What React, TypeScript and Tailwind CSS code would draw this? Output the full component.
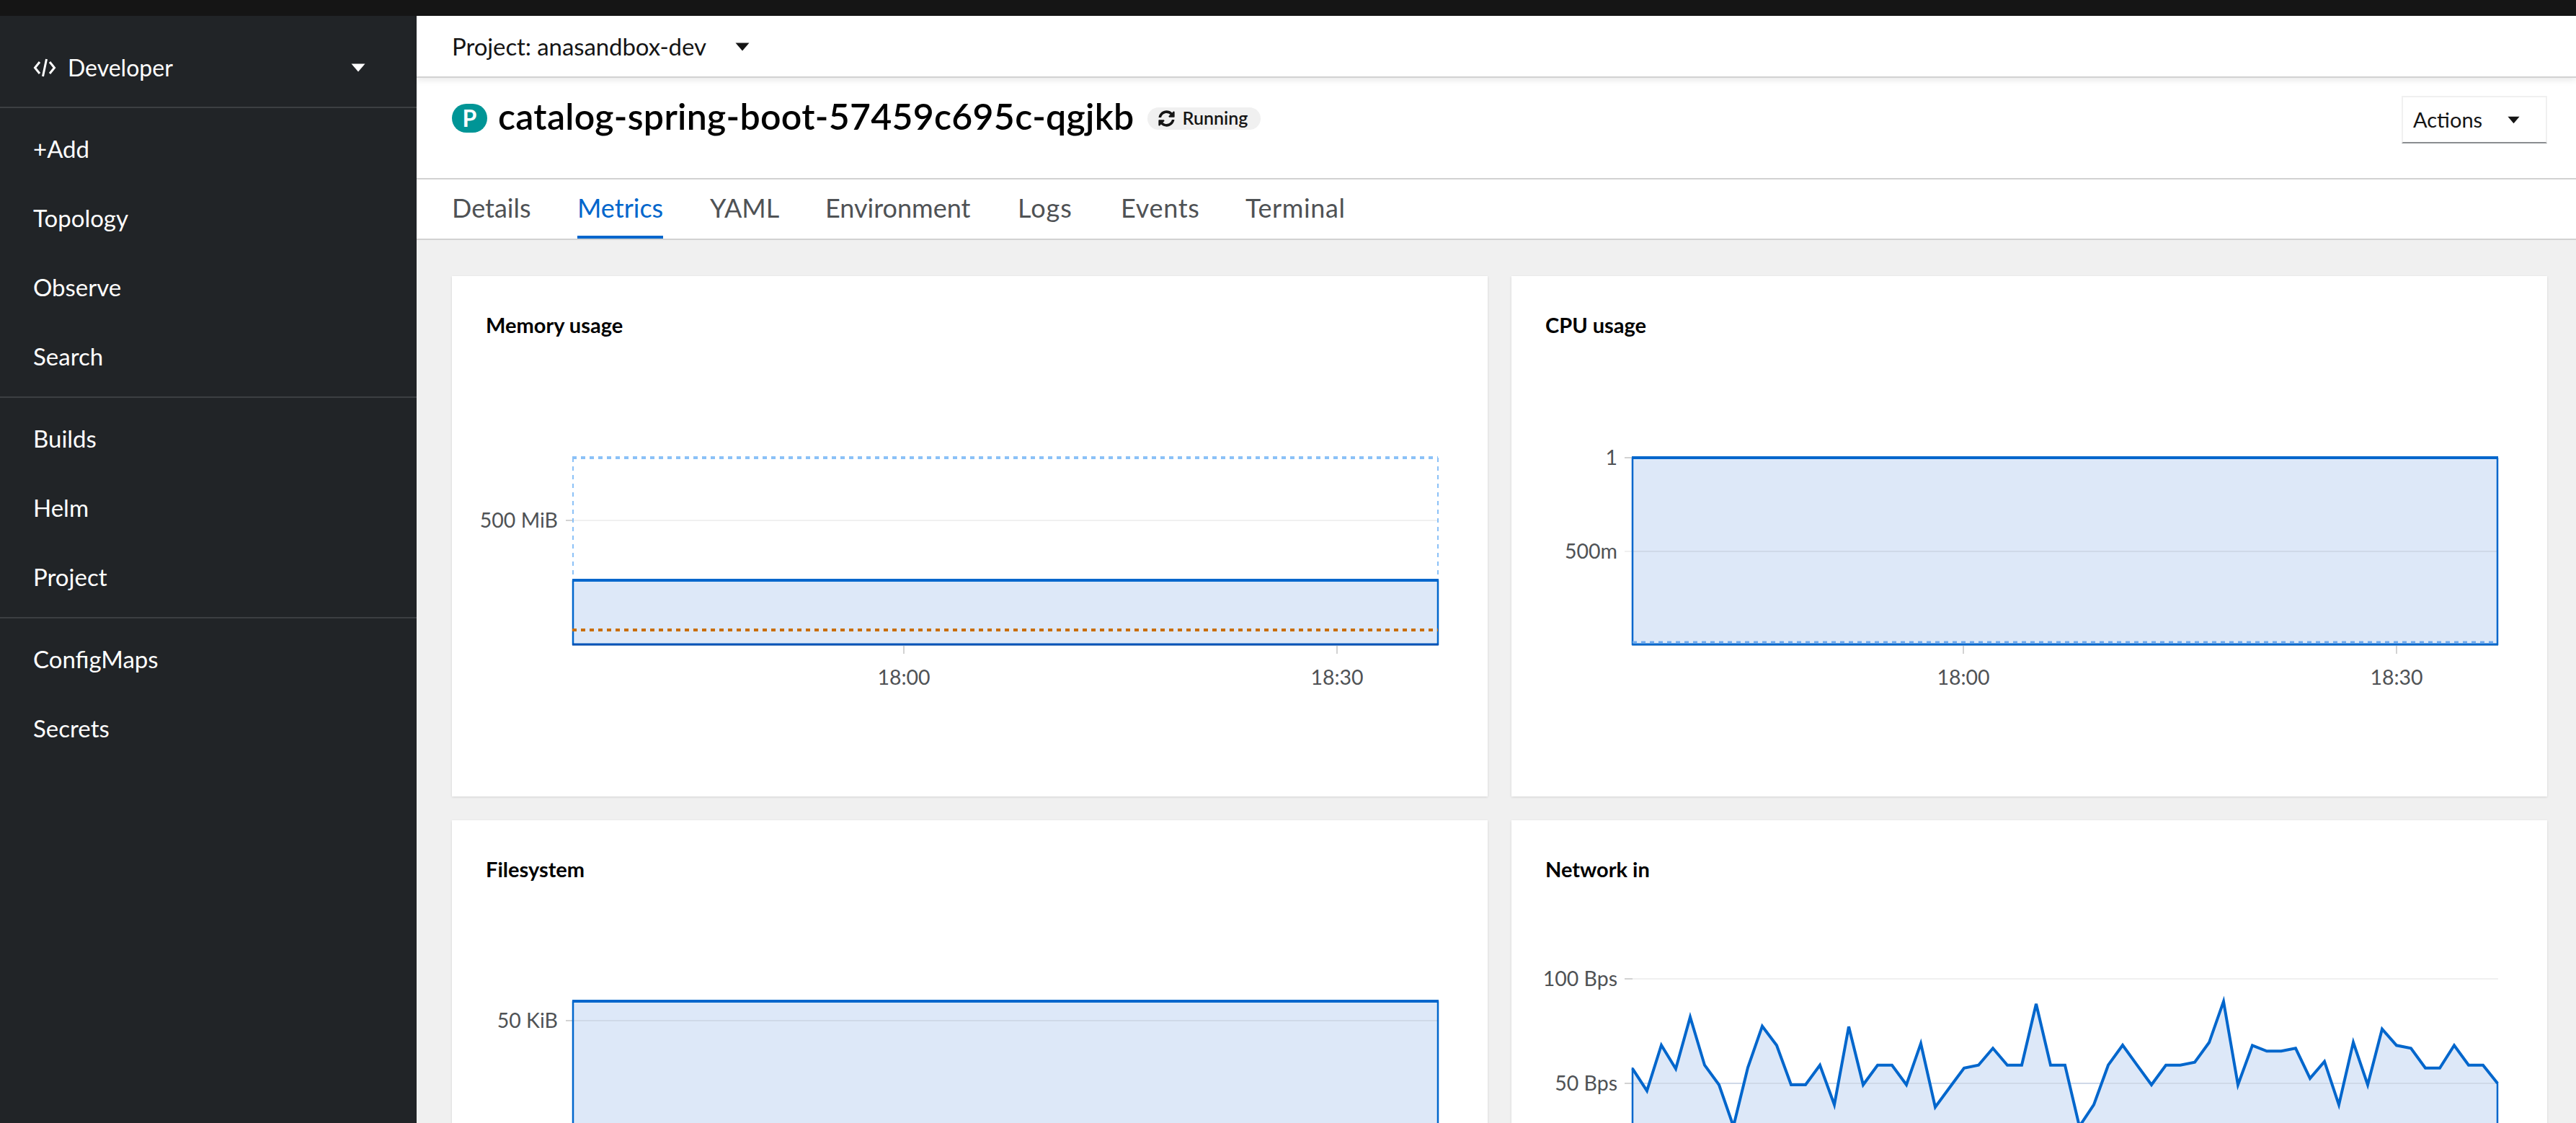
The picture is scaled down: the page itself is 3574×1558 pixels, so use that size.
import React from "react";
import { FaSyncAlt } from "react-icons/fa";

const font = { fontFamily: "Lato, sans-serif" };

const Caret = ({ className }: { className: string }) => (
  <svg viewBox="0 0 20 12" className={className} fill="currentColor">
    <path d="M0.5 0.5 H19.5 L10 11.5 Z" />
  </svg>
);

const navGroups = [
  ["+Add", "Topology", "Observe", "Search"],
  ["Builds", "Helm", "Project"],
  ["ConfigMaps", "Secrets"],
];

const tabs = [
  { label: "Details", cls: "w-[109px]" },
  { label: "Metrics", cls: "w-[119px]" },
  { label: "YAML", cls: "w-[95px]" },
  { label: "Environment", cls: "w-[202px]" },
  { label: "Logs", cls: "w-[78px] tracking-[1px]" },
  { label: "Events", cls: "w-[108px] tracking-[0.7px]" },
  { label: "Terminal", cls: "w-[137px] tracking-[0.6px]" },
];

const BLUE = "#0066cc";
const FILL = "#dde8f8";
const GRID = "#f0f0f0";
const TICK = "#d2d2d2";
const LABEL = "#4f5255";

const YLabel = ({ x, y, children }: { x: number; y: number; children: React.ReactNode }) => (
  <text x={x + 1} y={y + 10} textAnchor="end" fontSize={28.5} fill={LABEL} style={font}>
    {children}
  </text>
);
const XLabel = ({ x, y, children }: { x: number; y: number; children: React.ReactNode }) => (
  <text x={x} y={y + 10} textAnchor="middle" fontSize={28.5} fill={LABEL} style={font}>
    {children}
  </text>
);

const MemoryChart = () => (
  <svg viewBox="627 481 1437 622" className="block w-full h-[622px]">
    <line x1={785} x2={1995} y1={720} y2={720} stroke={GRID} strokeWidth={2} />
    <line x1={785} x2={794} y1={720} y2={720} stroke={TICK} strokeWidth={2} />
    <line x1={794} x2={1995} y1={893} y2={893} stroke={TICK} strokeWidth={2} />
    <line x1={1254} x2={1254} y1={893} y2={905} stroke={TICK} strokeWidth={2} />
    <line x1={1855} x2={1855} y1={893} y2={905} stroke={TICK} strokeWidth={2} />
    <line x1={794} x2={1995} y1={633} y2={633} stroke="#8bc1f7" strokeWidth={4} strokeDasharray="6 6" />
    <line x1={795} x2={795} y1={633} y2={803} stroke="#8bc1f7" strokeWidth={2} strokeDasharray="6 6" />
    <line x1={1995} x2={1995} y1={633} y2={803} stroke="#8bc1f7" strokeWidth={2} strokeDasharray="6 6" />
    <rect x={795} y={803} width={1200} height={90} fill={FILL} />
    <path d="M795 893 V803 M1995 803 V893" fill="none" stroke={BLUE} strokeWidth={2.5} />
    <line x1={794} x2={1996} y1={803} y2={803} stroke={BLUE} strokeWidth={4} />
    <line x1={794} x2={1996} y1={892} y2={892} stroke="#0053b8" strokeWidth={3} />
    <line x1={794} x2={1995} y1={872} y2={872} stroke="#c96d00" strokeWidth={4} strokeDasharray="6 6" />
    <YLabel x={773} y={720}>500 MiB</YLabel>
    <XLabel x={1254} y={938}>18:00</XLabel>
    <XLabel x={1855} y={938}>18:30</XLabel>
  </svg>
);

const CpuChart = () => (
  <svg viewBox="2097 481 1437 622" className="block w-full h-[622px]">
    <line x1={2254} x2={2265} y1={633} y2={633} stroke={TICK} strokeWidth={2} />
    <line x1={2254} x2={3466} y1={763} y2={763} stroke={GRID} strokeWidth={2} />
    <line x1={2265} x2={3466} y1={893} y2={893} stroke={TICK} strokeWidth={2} />
    <line x1={2724} x2={2724} y1={893} y2={905} stroke={TICK} strokeWidth={2} />
    <line x1={3325} x2={3325} y1={893} y2={905} stroke={TICK} strokeWidth={2} />
    <rect x={2265} y={633} width={1200} height={260} fill={FILL} />
    <line x1={2265} x2={3465} y1={763} y2={763} stroke="#cfd9e8" strokeWidth={2} />
    <path d="M2265 893 V633 M3465 633 V893" fill="none" stroke={BLUE} strokeWidth={2.5} />
    <line x1={2264} x2={3466} y1={633} y2={633} stroke={BLUE} strokeWidth={4} />
    <line x1={2264} x2={3466} y1={892} y2={892} stroke={BLUE} strokeWidth={3} />
    <line x1={2265} x2={3465} y1={889} y2={889} stroke="#6ea9ee" strokeWidth={3} strokeDasharray="6 6" />
    <YLabel x={2243} y={633}>1</YLabel>
    <YLabel x={2243} y={763}>500m</YLabel>
    <XLabel x={2724} y={938}>18:00</XLabel>
    <XLabel x={3325} y={938}>18:30</XLabel>
  </svg>
);

const FilesystemChart = () => (
  <svg viewBox="627 1237 1437 622" className="block w-full h-[622px]">
    <line x1={785} x2={794} y1={1415} y2={1415} stroke={TICK} strokeWidth={2} />
    <rect x={795} y={1388} width={1200} height={300} fill={FILL} />
    <line x1={795} x2={1995} y1={1415} y2={1415} stroke="#cfd9e8" strokeWidth={2} />
    <path d="M795 1700 V1388 M1995 1388 V1700" fill="none" stroke={BLUE} strokeWidth={2.5} />
    <line x1={794} x2={1996} y1={1388} y2={1388} stroke={BLUE} strokeWidth={4} />
    <YLabel x={773} y={1415}>50 KiB</YLabel>
  </svg>
);

const netZ = [
  545, 637, 447, 545, 330, 530, 612, 785, 540, 368, 448, 612, 612, 530, 695, 370, 612, 530, 530, 612, 440,
  705, 623, 542, 530, 460, 530, 530, 275, 530, 530, 785, 695, 530, 447, 530, 612, 530, 530, 518, 436, 265,
  612, 448, 472, 472, 460, 585, 515, 695, 435, 612, 380, 448, 460, 542, 542, 448, 530, 530, 605,
];
const netPts = netZ.map((z, i) => `${2265 + i * 20},${(1300 + z / 3).toFixed(1)}`).join(" ");

const NetworkChart = () => (
  <svg viewBox="2097 1237 1437 622" className="block w-full h-[622px]">
    <line x1={2254} x2={3466} y1={1357} y2={1357} stroke={GRID} strokeWidth={2} />
    <line x1={2254} x2={2265} y1={1357} y2={1357} stroke={TICK} strokeWidth={2} />
    <line x1={2254} x2={3466} y1={1502} y2={1502} stroke={GRID} strokeWidth={2} />
    <line x1={2254} x2={2265} y1={1502} y2={1502} stroke={TICK} strokeWidth={2} />
    <polygon points={`2265,1700 ${netPts} 3465,1700`} fill={FILL} />
    <line x1={2265} x2={3465} y1={1502} y2={1502} stroke="#cfd9e8" strokeWidth={2} />
    <polyline points={netPts} fill="none" stroke={BLUE} strokeWidth={4} />
    <path d="M2265 1480 V1700 M3465 1500 V1700" fill="none" stroke={BLUE} strokeWidth={2.5} />
    <YLabel x={2243} y={1357}>100 Bps</YLabel>
    <YLabel x={2243} y={1502}>50 Bps</YLabel>
  </svg>
);

const Card = ({ title, children }: { title: string; children: React.ReactNode }) => (
  <div className="h-[722px] bg-white shadow-[0_1px_3px_rgba(3,3,3,0.12)]">
    <div className="h-[100px] px-[47px] pt-[48px] text-[29px] leading-[40px] font-bold text-black">{title}</div>
    {children}
  </div>
);

export default function App() {
  return (
    <div className="flex h-[1558px] w-[3574px] flex-col overflow-hidden bg-[#f0f0f0]" style={font}>
      <div className="h-[22px] shrink-0 bg-[#151515]" />
      <div className="flex min-h-0 flex-1">
        <aside className="w-[578px] shrink-0 bg-[#212427] text-white">
          <div className="flex h-[126px] items-center justify-between pl-[46px] pr-[71px] pt-[18px] text-[32px]">
            <div className="flex items-center gap-[16px]">
              <svg viewBox="0 0 32 32" className="h-[32px] w-[32px]" fill="none" stroke="currentColor" strokeWidth={3}>
                <path d="M9 8 L2.5 16 L9 24" />
                <path d="M23 8 L29.5 16 L23 24" />
                <path d="M18.5 4 L13.5 28" />
              </svg>
              <span>Developer</span>
            </div>
            <Caret className="h-[12px] w-[20px]" />
          </div>
          {navGroups.map((g) => (
            <div key={g[0]} className="border-t-2 border-[#3c3f42] py-[8px]">
              {g.map((n) => (
                <div key={n} className="flex h-[96px] items-center px-[46px] pt-[2px] text-[33px]">
                  {n}
                </div>
              ))}
            </div>
          ))}
        </aside>
        <main className="flex min-w-0 flex-1 flex-col">
          <div className="z-10 flex h-[86px] shrink-0 items-center gap-[40px] border-b-2 border-[#d2d2d2] bg-white pl-[49px] pt-[1px] shadow-[0_4px_8px_rgba(3,3,3,0.08)] text-[33px] tracking-[-0.1px] text-[#151515]">
            <span>Project: anasandbox-dev</span>
            <Caret className="h-[12px] w-[20px]" />
          </div>
          <div className="flex h-[141px] shrink-0 border-b-2 border-[#d2d2d2] bg-white pl-[49px] pr-[40px]">
            <div className="flex h-[112px] flex-1 items-center">
              <span className="flex h-[40px] w-[49px] items-center justify-center rounded-full bg-[#009596] text-[32px] font-bold leading-none text-white">
                P
              </span>
              <h1 className="mb-[6px] ml-[15px] text-[50px] font-semibold tracking-[0.28px] leading-none text-black">
                catalog-spring-boot-57459c695c-qgjkb
              </h1>
              <span className="ml-[18px] flex h-[31px] w-[157px] items-center gap-[11px] rounded-full bg-[#f0f0f0] pl-[15px] text-[25px] font-semibold text-[#151515]">
                <FaSyncAlt className="h-[23px] w-[23px]" />
                Running
              </span>
            </div>
            <div className="mt-[25px] flex h-[66px] w-[202px] items-center border-2 border-[#f0f0f0] border-b-[#8a8d90] pl-[14px] text-[29px] text-[#151515]">
              <span className="w-[131px]">Actions</span>
              <Caret className="h-[11px] w-[17px]" />
            </div>
          </div>
          <nav className="flex h-[84px] shrink-0 gap-[65px] border-b-2 border-[#d2d2d2] bg-white pl-[49px] text-[36px] text-[#4f5255]">
            {tabs.map((t) =>
              t.label === "Metrics" ? (
                <div key={t.label} className={`flex items-center border-b-[4px] border-[#0066cc] text-[#0066cc] ${t.cls}`}>
                  {t.label}
                </div>
              ) : (
                <div key={t.label} className={`flex items-center pb-[4px] ${t.cls}`}>
                  {t.label}
                </div>
              )
            )}
          </nav>
          <div className="min-h-0 flex-1 overflow-hidden pl-[49px] pr-[40px] pt-[50px]">
            <div className="grid grid-cols-2 gap-[33px]">
              <Card title="Memory usage"><MemoryChart /></Card>
              <Card title="CPU usage"><CpuChart /></Card>
              <Card title="Filesystem"><FilesystemChart /></Card>
              <Card title="Network in"><NetworkChart /></Card>
            </div>
          </div>
        </main>
      </div>
    </div>
  );
}
